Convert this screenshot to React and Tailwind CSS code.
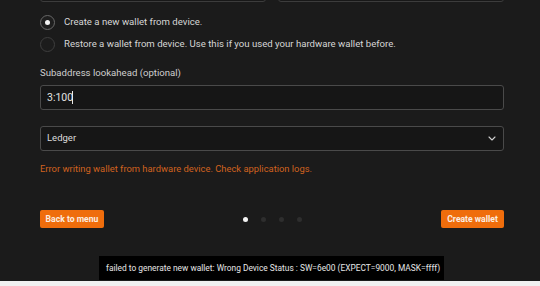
import React, { useState } from "react";

const dots = [0, 1, 2, 3];

function Radio({ checked, label, onClick }) {
  return (
    <button type="button" onClick={onClick} className="flex h-[22px] items-center text-left">
      <span
        className={
          checked
            ? "grid h-[15px] w-[15px] place-items-center rounded-full border border-[#686868] bg-[#1e1e1e]"
            : "grid h-[15px] w-[15px] place-items-center rounded-full border border-[#3e3e3e] bg-[#1c1c1c]"
        }
      >
        {checked && <span className="h-[5px] w-[5px] rounded-full bg-[#f2f2f2]" />}
      </span>
      <span className="ml-[9px] text-[9.6px] text-[#d6d6d6]">{label}</span>
    </button>
  );
}

export default function App() {
  const [mode, setMode] = useState(0);
  const [lookahead, setLookahead] = useState("3:100");

  return (
    <div
      className="flex h-[286px] w-[540px] flex-col overflow-hidden bg-[#f0f0f0]"
      style={{ fontFamily: "Roboto, 'Liberation Sans', sans-serif" }}
    >
      <div className="relative h-[281px] bg-[#1b1b1b]">
        <div className="flex flex-col pl-[40px] pr-[36px]">
          <div className="mt-[-24px] flex gap-[12px]">
            <div className="h-[26px] flex-1 rounded-[3px] border border-[#3c3c3c] bg-[#181818]" />
            <div className="h-[26px] flex-1 rounded-[3px] border border-[#3c3c3c] bg-[#181818]" />
          </div>

          <div className="mt-[9px] flex flex-col">
            <Radio checked={mode === 0} onClick={() => setMode(0)} label="Create a new wallet from device." />
            <Radio
              checked={mode === 1}
              onClick={() => setMode(1)}
              label="Restore a wallet from device. Use this if you used your hardware wallet before."
            />
          </div>

          <label className="mt-[11px] text-[9.6px] leading-[14px] text-[#cfcfcf]">Subaddress lookahead (optional)</label>
          <div className="mt-[5px] flex h-[25px] items-center rounded-[3px] border border-[#4a4a4a] bg-[#161616] px-[6px]">
            <input
              value={lookahead}
              onChange={(e) => setLookahead(e.target.value)}
              className="w-[26px] bg-transparent text-[10.5px] text-[#e2e2e2] outline-none"
            />
            <span className="ml-[-1px] h-[13px] w-px bg-[#e8e8e8]" />
          </div>

          <div className="mt-[16px] flex h-[25px] items-center justify-between rounded-[3px] border border-[#4a4a4a] bg-[#161616] pl-[6px] pr-[6px]">
            <span className="text-[9.5px] text-[#dcdcdc]">Ledger</span>
            <svg width="8" height="5" viewBox="0 0 8 5" fill="none" className="mr-[1px]">
              <path d="M1 1l3 3 3-3" stroke="#cfcfcf" strokeWidth="1.1" strokeLinecap="round" strokeLinejoin="round" />
            </svg>
          </div>

          <p className="mt-[10px] text-[9.4px] leading-[16px] text-[#d0621f]">
            Error writing wallet from hardware device. Check application logs.
          </p>

          <div className="mt-[33px] flex h-[18px] items-center justify-between">
            <button type="button" className="h-[18px] w-[64px] rounded-[2px] bg-[#ef6d0c] text-[8.6px] font-bold text-[#fbeee2]">
              Back to menu
            </button>
            <div className="flex items-center gap-[13px]">
              {dots.map((d) => (
                <span
                  key={d}
                  className={d === 0 ? "h-[5px] w-[5px] rounded-full bg-[#f4f4f4]" : "h-[5px] w-[5px] rounded-full bg-[#2e2e2e]"}
                />
              ))}
            </div>
            <button type="button" className="h-[18px] w-[63px] rounded-[2px] bg-[#ef6d0c] text-[8.6px] font-bold text-[#fbeee2]">
              Create wallet
            </button>
          </div>
        </div>

        <div className="absolute left-[99px] top-[256px] flex h-[24px] w-[345px] items-center bg-black pl-[7px]">
          <span className="whitespace-nowrap text-[8.4px] text-[#e6e6e6]">
            failed to generate new wallet: Wrong Device Status : SW=6e00 (EXPECT=9000, MASK=ffff)
          </span>
        </div>
      </div>
      <div className="h-[5px] bg-[#f0f0f0]" />
    </div>
  );
}
